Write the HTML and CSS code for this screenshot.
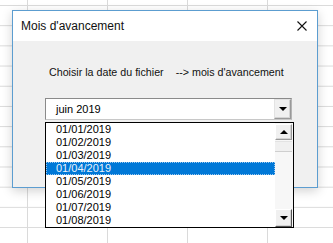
FILE: index.html
```html
<!DOCTYPE html>
<html lang="fr">
<head>
    <meta charset="UTF-8">
    <meta name="viewport" content="width=device-width, initial-scale=1.0">
    <title>Mois d'avancement</title>
    <link rel="stylesheet" href="styles.css">
</head>
<body>
    <div class="dialog">
        <div class="titlebar">
            <span class="title">Mois d'avancement</span>
            <svg class="close" width="10" height="10" viewBox="0 0 10 10">
                <path d="M0.5 0.5 L9.5 9.5 M9.5 0.5 L0.5 9.5" stroke="#111" stroke-width="1.1" fill="none"/>
            </svg>
        </div>
        <div class="content">
            <div class="label">
                <span>Choisir la date du fichier</span>
                <span class="arrow">--&gt; mois d'avancement</span>
            </div>
            <div class="combo">
                <span class="combo-value">juin 2019</span>
                <span class="btn combo-btn"><i class="tri-down"></i></span>

                <!-- Dropdown list (open) -->
                <div class="listbox">
                    <ul class="items">
                        <li>01/01/2019</li>
                        <li>01/02/2019</li>
                        <li>01/03/2019</li>
                        <li class="selected">01/04/2019</li>
                        <li>01/05/2019</li>
                        <li>01/06/2019</li>
                        <li>01/07/2019</li>
                        <li>01/08/2019</li>
                    </ul>
                    <div class="scrollbar">
                        <span class="btn sb-btn"><i class="tri-up"></i></span>
                        <span class="thumb"></span>
                        <span class="track"></span>
                        <span class="btn sb-btn"><i class="tri-down"></i></span>
                    </div>
                </div>
            </div>
        </div>
    </div>
</body>
</html>
```

FILE: styles.css
```css
/* Reset CSS */
* {
    margin: 0;
    padding: 0;
    box-sizing: border-box;
}

body {
    width: 333px;
    height: 243px;
    overflow: hidden;
    background-color: #ffffff;
    /* spreadsheet grid behind the dialog */
    background-image:
        linear-gradient(to right, #dadada 1px, transparent 1px),
        linear-gradient(to bottom, #dadada 1px, transparent 1px);
    background-size: 80px 100%, 100% 20.2px;
    background-position: 27px 0, 0 5px;
    font-family: 'Liberation Sans', Arial, sans-serif;
    color: #000;
    padding: 10px 0 0 12px;
}

.dialog {
    width: 306px;
    height: 178px;
    border: 1px solid #5c9dd0;
    background: #f0f0f0;
    box-shadow: 0 3px 10px rgba(0, 0, 0, 0.18);
    display: flex;
    flex-direction: column;
}

.titlebar {
    height: 30px;
    background: #ffffff;
    display: flex;
    align-items: center;
    justify-content: space-between;
    padding: 0 10px 0 8px;
}

.title {
    font-size: 12px;
    color: #111;
}

.content {
    padding: 25px 0 0 32px;
}

.label {
    font-size: 10.7px;
    line-height: 13px;
    padding-left: 4px;
    display: flex;
    color: #111;
}

.label .arrow {
    margin-left: 12px;
}

.combo {
    position: relative;
    margin-top: 19px;
    width: 247px;
    height: 22px;
    border: 1px solid #8a8a8a;
    border-right-color: #b5b5b5;
    border-bottom-color: #c8c8c8;
    background: #fff;
    display: flex;
    align-items: stretch;
    font-size: 11px;
}

.combo-value {
    flex: 1;
    padding-left: 10px;
    line-height: 20px;
}

/* classic raised 3d button */
.btn {
    display: flex;
    align-items: center;
    justify-content: center;
    background: #f0f0f0;
    border-top: 1px solid #fff;
    border-left: 1px solid #fff;
    border-right: 1px solid #9a9a9a;
    border-bottom: 1px solid #9a9a9a;
    box-shadow: inset -1px -1px 0 #d4d4d4;
}

.combo-btn {
    width: 17px;
    border-top-color: #e3e3e3;
    border-left-color: #e3e3e3;
}

.tri-down,
.tri-up {
    width: 0;
    height: 0;
    border-left: 4px solid transparent;
    border-right: 4px solid transparent;
}

.tri-down {
    border-top: 4px solid #000;
}

.tri-up {
    border-bottom: 4px solid #000;
}

.listbox {
    position: absolute;
    top: 23px;
    left: -1px;
    width: 249px;
    height: 106px;
    border: 1px solid #000;
    background: #fff;
    display: flex;
    z-index: 10;
}

.items {
    list-style: none;
    flex: 1;
    font-size: 11px;
}

.items li {
    height: 13px;
    line-height: 13px;
    padding-left: 10px;
}

.items li.selected {
    background: #0078d7;
    color: #e8f2fc;
    outline: 1px dotted #9cc8ee;
    outline-offset: -1px;
}

.scrollbar {
    width: 18px;
    display: flex;
    flex-direction: column;
    background: #f7f7f7;
    padding: 1px 1px 0 0;
}

.sb-btn {
    height: 16px;
}

.thumb {
    height: 11px;
    margin-top: 1px;
    background: #f0f0f0;
    border-top: 1px solid #e3e3e3;
    border-bottom: 1px solid #cfcfcf;
}

.track {
    flex: 1;
}

.scrollbar .sb-btn:last-child {
    height: 18px;
    border-right-color: #555;
    border-bottom-color: #555;
}
```
